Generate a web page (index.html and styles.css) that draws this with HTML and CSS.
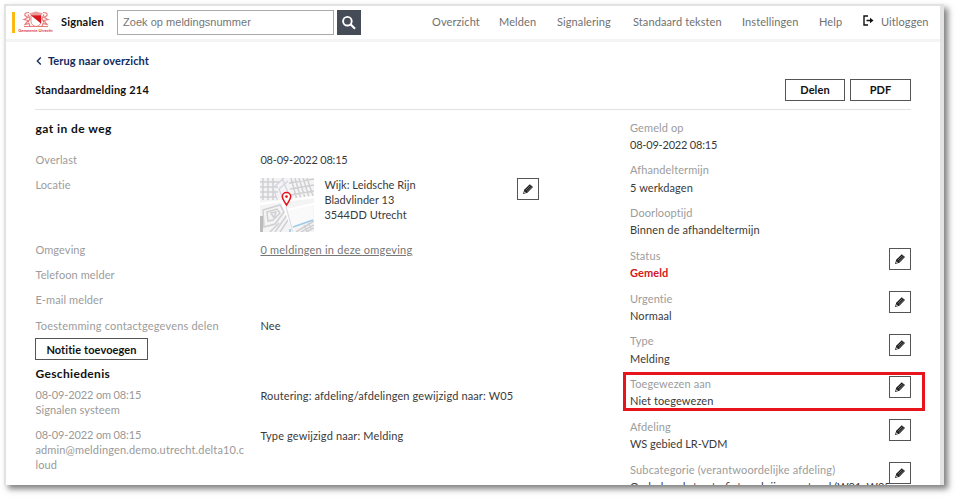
FILE: index.html
```html
<!DOCTYPE html>
<html lang="nl">
<head>
<meta charset="utf-8">
<title>Signalen - Standaardmelding 214</title>
<link rel="stylesheet" href="styles.css">
</head>
<body>
<svg width="0" height="0" class="defs">
  <symbol id="pencil" viewBox="0 0 12 12"><path d="M1 11 L2.2 6.8 L7.8 1.2 L11 4 L5.4 9.8 Z" fill="#181818"/><path d="M3.6 7.5 L8.6 2.6 M4.9 8.6 L9.9 3.7" stroke="#bbb" stroke-width=".6"/><path d="M2.5 8.2 L4 9.6 L2 10.2 Z" fill="#ddd"/></symbol>
</svg>
<div class="window">
  <header class="topbar">
    <span class="stripe"></span>
    <div class="logo">
      <svg width="28" height="17" viewBox="0 0 28 16"><path d="M7 2 L14 0 L21 2 L19 4 H9 Z" fill="#eb9b9b"/><path d="M9 4 H19 V10 Q19 14 14 15 Q9 14 9 10 Z" fill="#fff" stroke="#e05555" stroke-width=".7"/><path d="M9 4 H19 V12 Z" fill="#d8141c"/><path d="M7 1 Q2 1 3 4 L6 6 L2 8 L6 9 L3 13 L7 12 L8 15 H2 M21 1 Q26 1 25 4 L22 6 L26 8 L22 9 L25 13 L21 12 L20 15 H26 M6 3 L8 7 L6 11 M22 3 L20 7 L22 11 M8 15 H20" fill="none" stroke="#e67c7c" stroke-width="1.2"/></svg>
      <span class="logo-text">Gemeente Utrecht</span>
    </div>
    <strong class="brand">Signalen</strong>
    <div class="search">Zoek op meldingsnummer</div>
    <button class="search-btn"><svg width="16" height="16" viewBox="0 0 16 16" fill="none" stroke="#fff"><circle cx="6.4" cy="6.2" r="4.3" stroke-width="1.9"/><path d="M9.5 9.3 L14 13.7" stroke-width="2.2"/></svg></button>
    <nav class="nav">
      <a class="n1">Overzicht</a><a class="n2">Melden</a><a class="n3">Signalering</a><a class="n4">Standaard teksten</a><a class="n5">Instellingen</a><a class="n6">Help</a>
      <a class="logout"><svg width="11" height="11" viewBox="0 0 11 11"><path d="M5 1 H1 V10 H5 M3.5 5.5 H8" fill="none" stroke="#111" stroke-width="1.4"/><path d="M7 2.8 L10.5 5.5 L7 8.2 Z" fill="#111"/></svg><span>Uitloggen</span></a>
    </nav>
  </header>
  <main class="page">
    <a class="back"><svg width="6" height="8" viewBox="0 0 6 8"><path d="M4.8 .5 L1.3 4 L4.8 7.5" fill="none" stroke="#0f2b5e" stroke-width="1.3"/></svg><span>Terug naar overzicht</span></a>
    <div class="titlebar">
      <h1>Standaardmelding 214</h1>
      <button class="btn share">Delen</button><button class="btn">PDF</button>
    </div>
    <div class="columns">
      <section class="details">
        <h2>gat in de weg</h2>
        <div class="row"><span class="label">Overlast</span><span class="date">08-09-2022 08:15</span></div>
        <div class="row location">
          <span class="label">Locatie</span>
          <svg class="map" width="54" height="54" viewBox="0 0 54 54">
            <rect width="54" height="54" fill="#f4f4f4"/>
            <path d="M0 4H20M0 9H18M0 14H18M0 19H17M3 0V22M8 0V22M13 0V22M31 0L37 22M35 0L41 21M39 0L45 20M43 0L49 19M47 0L53 18M29 5L54 1M30 11L54 7M30 17L54 13M3 32L20 27L24 34L15 46L4 49ZM7 34L17 31L20 35L13 42L8 43ZM11 35L16 34L14 40ZM20 54L28 42M15 54L27 37M10 54L19 45M36 54L54 43M41 54L54 47M46 54L54 50M44 47L48 54M48 45L52 52" fill="none" stroke="#d0d0d3" stroke-width="1.5"/>
            <path d="M18 24L13 10L24 0M24 23L19 11L28 3M22 0L29 17" fill="none" stroke="#d5d5e3" stroke-width="1.3"/>
            <path d="M0 26L22 23L54 19M22 23L34 54M22 23L27 32L54 26" fill="none" stroke="#fff" stroke-width="2.5"/>
            <path d="M26 29L33 54" stroke="#dcdce8" stroke-width="1.2"/>
            <path d="M28 33L53 27V41L33 49Z" fill="#fafafa"/><path d="M0 38H3V54H0Z" fill="#bbb"/>
            <path d="M33 49L53 42M30 51V54" stroke="#9ccbe8" stroke-width="1.7"/>
            <path d="M26.5 27C23.5 22 22.3 20.8 22.3 18.8A4.2 4.2 0 0 1 30.7 18.8C30.7 20.8 29.5 22 26.5 27Z" fill="#fff" stroke="#e3131b" stroke-width="1.5"/><circle cx="26.5" cy="18.6" r="1.3" fill="#e3131b"/>
          </svg>
          <address>Wijk: Leidsche Rijn<br>Bladvlinder 13<br>3544DD Utrecht</address>
          <button class="edit"><svg width="12" height="12"><use href="#pencil"/></svg></button>
        </div>
        <div class="row"><span class="label">Omgeving</span><a class="link">0 meldingen in deze omgeving</a></div>
        <div class="row"><span class="label">Telefoon melder</span></div>
        <div class="row"><span class="label">E-mail melder</span></div>
        <div class="row"><span class="label consent">Toestemming contactgegevens delen</span><span>Nee</span></div>
        <button class="btn note">Notitie toevoegen</button>
        <h3>Geschiedenis</h3>
        <div class="event"><div class="who"><span class="when">08-09-2022 om 08:15</span><br>Signalen systeem</div><p class="routing">Routering: afdeling/afdelingen gewijzigd naar: W05</p></div>
        <div class="event"><div class="who"><span class="when">08-09-2022 om 08:15</span><br><span class="mail">admin@meldingen.demo.utrecht.delta10.c<br>loud</span></div><p class="routing">Type gewijzigd naar: Melding</p></div>
      </section>
      <aside class="meta">
        <dl><dt>Gemeld op</dt><dd class="date">08-09-2022 08:15</dd></dl>
        <dl><dt>Afhandeltermijn</dt><dd>5 werkdagen</dd></dl>
        <dl><dt>Doorlooptijd</dt><dd>Binnen de afhandeltermijn</dd></dl>
        <dl><dt>Status</dt><dd class="status">Gemeld</dd><button class="edit"><svg width="12" height="12"><use href="#pencil"/></svg></button></dl>
        <dl><dt>Urgentie</dt><dd>Normaal</dd><button class="edit"><svg width="12" height="12"><use href="#pencil"/></svg></button></dl>
        <dl><dt>Type</dt><dd>Melding</dd><button class="edit"><svg width="12" height="12"><use href="#pencil"/></svg></button></dl>
        <dl class="marked"><dt>Toegewezen aan</dt><dd>Niet toegewezen</dd><button class="edit"><svg width="12" height="12"><use href="#pencil"/></svg></button></dl>
        <dl><dt>Afdeling</dt><dd class="team">WS gebied LR-VDM</dd><button class="edit"><svg width="12" height="12"><use href="#pencil"/></svg></button></dl>
        <dl><dt class="sub">Subcategorie (verantwoordelijke afdeling)</dt><dd class="long">Onderhoud straat-, fietspad rijwegentegel (W01, W05</dd><button class="edit"><svg width="12" height="12"><use href="#pencil"/></svg></button></dl>
      </aside>
    </div>
  </main>
</div>
</body>
</html>
```
FILE: styles.css
```css
* { box-sizing: border-box; }
body { margin: 0; height: 498px; overflow: hidden; background: #fff; font: 11px/15px Lato, "Liberation Sans", sans-serif; color: #3a3a3a; letter-spacing: .1px; }
h1, h2, h3, p, dl, dd, address { margin: 0; font-style: normal; }
button { font: inherit; padding: 0; letter-spacing: inherit; }
.defs { position: absolute; }
.window { margin: 4px 0 0 4px; width: 940px; height: 481px; overflow: clip; background: #fff; border: solid #e2e2e2; border-width: 2px 4px 0 2px; box-shadow: 4px 4px 6px rgba(0,0,0,.5); }
.topbar { display: flex; align-items: center; height: 36px; padding-bottom: 1px; border-bottom: 3px solid #f4f4f4; }
.stripe { width: 3px; height: 21px; margin-left: 6px; background: #fcb814; }
.logo { display: flex; flex-direction: column; align-items: center; width: 35px; margin-left: 3px; }
.logo-text { font-size: 4.2px; line-height: 5px; font-weight: 700; color: #e13c3c; letter-spacing: 0; white-space: nowrap; }
.brand { width: 56px; margin: -2px 0 0 8px; color: #111; letter-spacing: .2px; }
.search { width: 217px; height: 25px; margin-top: 1px; border: 1px solid #aaa; padding-left: 5px; font: 11px/23px "Liberation Sans", sans-serif; color: #757575; letter-spacing: .03px; }
.search-btn { display: grid; place-items: center; width: 24px; height: 25px; margin: 1px 0 0 3px; border: 0; background: #464c57; }
.nav { display: flex; margin: -1px 0 0 71px; color: #707070; white-space: nowrap; }
.n1 { width: 67px; } .n2 { width: 58px; } .n3 { width: 76px; } .n4 { width: 109px; } .n5 { width: 77px; } .n6 { width: 44px; }
.logout { display: flex; gap: 7px; }
.logout svg { margin-top: 1px; }
.page { padding: 11px 29px 0; }
.back { display: flex; align-items: center; gap: 6px; height: 15px; padding-left: 1px; font-weight: 700; color: #0f2b5e; }
.titlebar { display: flex; align-items: center; gap: 5px; height: 42px; padding-top: 2px; border-bottom: 1px solid #e2e2e2; }
h1 { flex: 1; font-size: 11px; color: #111; letter-spacing: .2px; }
.btn { width: 61px; height: 22px; border: 1px solid #555; background: #fff; color: #111; font-weight: 700; }
.share { width: 60px; }
.columns { display: flex; justify-content: space-between; }
.details { width: 520px; padding: 10px 0 0 .4px; }
h2, h3 { font-size: 12px; line-height: 17px; color: #111; letter-spacing: .35px; }
h2 { margin-bottom: 10px; letter-spacing: .45px; }
.row { display: flex; height: 25.25px; padding-top: 5px; white-space: nowrap; }
.label { width: 225px; color: #9c9c9c; }
.consent { letter-spacing: .18px; }
.date { letter-spacing: -.2px; }
.when { letter-spacing: -.14px; }
.location { height: 64.5px; }
.map { margin-top: 1px; }
address { width: 193px; margin-left: 10px; line-height: 14.7px; letter-spacing: .03px; padding-top: 1px; }
.edit { display: grid; place-items: center; width: 22px; height: 22px; border: 1px solid #555; background: #fff; }
.location .edit { margin-top: 1px; }
.link { text-decoration: underline; color: #767676; letter-spacing: .22px; }
.note { display: block; width: 113px; margin: .5px 0 0 -.4px; }
h3 { margin: 5px 0 5px; }
.event { display: flex; align-items: flex-start; height: 40px; white-space: nowrap; }
.who { width: 225px; color: #999; margin-top: -.5px; }
.mail { letter-spacing: .15px; }
.routing { margin-top: .5px; letter-spacing: .13px; }
.meta { width: 281px; padding-top: 9.5px; }
dl { position: relative; height: 42.75px; line-height: 15px; white-space: nowrap; }
dt { color: #9c9c9c; }
dd { margin-top: 2.3px; }
.team { letter-spacing: 0; }
.sub { letter-spacing: .16px; }
.long { letter-spacing: 0; }
.status { color: #d2161d; font-weight: 700; }
dl .edit { position: absolute; right: 0; top: .4px; }
.marked::after { content: ""; position: absolute; inset: -4px -14px 8px -7px; border: 3px solid #e8141c; }
```
